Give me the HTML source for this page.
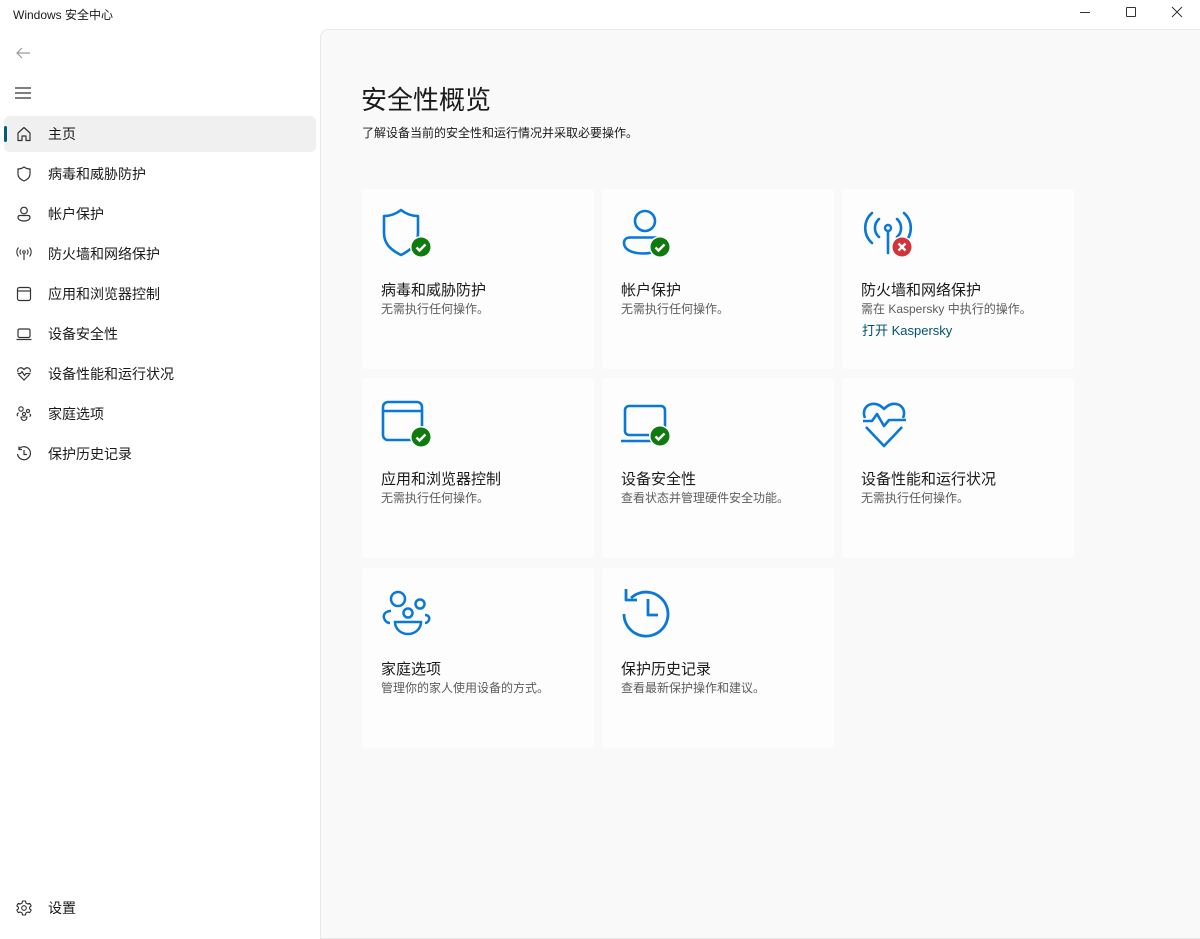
<!DOCTYPE html>
<html><head><meta charset="utf-8"><style>
*{margin:0;padding:0;box-sizing:border-box}
body{width:1200px;height:929px;background:#fff;font-family:"Liberation Sans","Noto Sans CJK SC",sans-serif;position:relative;overflow:hidden;color:#1a1a1a}
.title{position:absolute;left:13px;top:6px;font-size:12px;color:#1a1a1a}
.win{position:absolute;top:0;right:0;height:30px;display:flex}
.win div{width:46px;height:30px;position:relative}
.panel{position:absolute;left:320px;top:29px;width:890px;height:910px;background:#f9f9f9;border:1px solid #e8e8e8;border-radius:8px 0 0 0}
.nav{position:absolute;left:4px;width:312px;height:36px;font-size:14px;line-height:36px;padding-left:44px}
.nav svg{position:absolute;left:12px;top:10px}
.sel{background:#f0f0f0;border-radius:5px}
.sel:before{content:"";position:absolute;left:0;top:10px;width:3px;height:16px;border-radius:2px;background:#005f73}
h1{position:absolute;left:361px;top:80px;font-size:26px;font-weight:normal;color:#1a1a1a}
.sub{position:absolute;left:362px;top:124px;font-size:12px;color:#1a1a1a}
.card{position:absolute;width:232px;height:180px;background:#fdfdfd;border-radius:4px}
.card svg{position:absolute;left:18px;top:18px}
.card .t{position:absolute;left:19px;top:90px;font-size:15px;color:#1a1a1a}
.card .d{position:absolute;left:19px;top:111px;font-size:12px;color:#5d5d5d}
.card .l{position:absolute;left:20px;top:131px;font-size:13px;color:#00536b}
</style></head><body>
<div class="title">Windows 安全中心</div>
<div class="win">
<div><div style="position:absolute;left:18px;top:12px;width:10px;height:1px;background:#333"></div></div>
<div><div style="position:absolute;left:18px;top:7px;width:10px;height:10px;border:1px solid #333;border-radius:1px"></div></div>
<div><svg width="46" height="30" style="position:absolute;left:0;top:0"><path d="M18 7l10 10M28 7l-10 10" stroke="#333" stroke-width="1"/></svg></div>
</div>

<svg style="position:absolute;left:15px;top:46px" width="16" height="14"><path d="M15 7H2M7 2L2 7l5 5" fill="none" stroke="#9a9a9a" stroke-width="1.2"/></svg>
<svg style="position:absolute;left:15px;top:87px" width="16" height="12"><path d="M0 1h16M0 6h16M0 11h16" stroke="#333" stroke-width="1.2"/></svg>

<div class="nav sel" style="top:116px"><svg width="16" height="16"><path d="M2 7L8 1.5 14 7v7.5H10V10H6v4.5H2z" fill="none" stroke="#333" stroke-width="1.2" stroke-linejoin="round"/></svg>主页</div>
<div class="nav" style="top:156px"><svg width="16" height="16"><path d="M8 1C6 2.5 4 3 2 3v5c0 3 2.5 5.5 6 7 3.5-1.5 6-4 6-7V3c-2 0-4-.5-6-2z" fill="none" stroke="#333" stroke-width="1.2"/></svg>病毒和威胁防护</div>
<div class="nav" style="top:196px"><svg width="16" height="16"><circle cx="8" cy="4.5" r="3.3" fill="none" stroke="#333" stroke-width="1.2"/><path d="M2 11.5c0-1.5 1-2 2-2h8c1 0 2 .5 2 2 0 2-2.5 3.5-6 3.5s-6-1.5-6-3.5z" fill="none" stroke="#333" stroke-width="1.2"/></svg>帐户保护</div>
<div class="nav" style="top:236px"><svg width="16" height="16"><circle cx="8" cy="6" r="1.3" fill="none" stroke="#333"/><path d="M8 7.5V14M5 3.5a3.5 3.5 0 000 5M11 3.5a3.5 3.5 0 010 5M2.5 1.5a7 7 0 000 9M13.5 1.5a7 7 0 010 9" fill="none" stroke="#333" stroke-width="1.1"/></svg>防火墙和网络保护</div>
<div class="nav" style="top:276px"><svg width="16" height="16"><rect x="1.5" y="1.5" width="13" height="13" rx="2" fill="none" stroke="#333" stroke-width="1.2"/><path d="M1.5 5h13" stroke="#333" stroke-width="1.2"/></svg>应用和浏览器控制</div>
<div class="nav" style="top:316px"><svg width="16" height="16"><rect x="2" y="3" width="12" height="8.5" rx="1.5" fill="none" stroke="#333" stroke-width="1.2"/><path d="M0.5 13.5h15" stroke="#333" stroke-width="1.2"/></svg>设备安全性</div>
<div class="nav" style="top:356px"><svg width="16" height="16"><path d="M1.5 7.5h3l1.5-2 2.5 4 1.5-2h4.5M2.5 8.5L8 14l5.5-5.5M2 6C0.5 2.5 5 0 8 3.5 11-0 15.5 2.5 14 6" fill="none" stroke="#333" stroke-width="1.2"/></svg>设备性能和运行状况</div>
<div class="nav" style="top:396px"><svg width="16" height="16"><circle cx="5" cy="3" r="2.2" fill="none" stroke="#333" stroke-width="1.1"/><circle cx="12" cy="5" r="1.6" fill="none" stroke="#333" stroke-width="1.1"/><circle cx="8" cy="8" r="1.6" fill="none" stroke="#333" stroke-width="1.1"/><path d="M3 7C1 7 .5 9 2 10M13.5 8c1.5.5 1.5 2 0 2.5M5 11h6c0 2-1.5 3.5-3 3.5S5 13 5 11z" fill="none" stroke="#333" stroke-width="1.1"/></svg>家庭选项</div>
<div class="nav" style="top:436px"><svg width="16" height="16"><path d="M3 3A6.5 6.5 0 1 1 1.5 8M3 0.5v3h3M8 4v4.5h3" fill="none" stroke="#333" stroke-width="1.2"/></svg>保护历史记录</div>
<div class="nav" style="top:890px"><svg width="16" height="16"><circle cx="8" cy="8" r="2.3" fill="none" stroke="#333" stroke-width="1.1"/><path d="M6.5 1h3l.4 2 1.8 1 2-.7 1.5 2.6-1.6 1.3v1.6l1.6 1.3-1.5 2.6-2-.7-1.8 1-.4 2h-3l-.4-2-1.8-1-2 .7L.8 10.1l1.6-1.3V7.2L.8 5.9l1.5-2.6 2 .7 1.8-1z" fill="none" stroke="#333" stroke-width="1.1" stroke-linejoin="round"/></svg>设置</div>

<div class="panel"></div>
<h1>安全性概览</h1>
<div class="sub">了解设备当前的安全性和运行情况并采取必要操作。</div>

<!-- row1 -->
<div class="card" style="left:362px;top:189px">
<svg width="60" height="60"><path d="M21 3c-5 4-10 6-17 6v17c0 11 7 17 17 22 10-5 17-11 17-22V9c-7 0-12-2-17-6z" fill="none" stroke="#0a78d7" stroke-width="2.6" stroke-linejoin="round"/><circle cx="41" cy="40" r="11" fill="#fdfdfd"/><circle cx="41" cy="40" r="9.5" fill="#0f7b0f"/><path d="M36.5 40.5l3 3 6-6" fill="none" stroke="#fff" stroke-width="2.4"/></svg>
<div class="t">病毒和威胁防护</div><div class="d">无需执行任何操作。</div></div>
<div class="card" style="left:602px;top:189px">
<svg width="60" height="60"><circle cx="25" cy="14" r="10" fill="none" stroke="#0a78d7" stroke-width="2.6"/><path d="M4 36c0-4 3-5.5 6-5.5h26c3 0 6 1.5 6 5.5 0 6-7 10.5-19 10.5S4 42 4 36z" fill="none" stroke="#0a78d7" stroke-width="2.6"/><circle cx="40" cy="40" r="11" fill="#fdfdfd"/><circle cx="40" cy="40" r="9.5" fill="#0f7b0f"/><path d="M35.5 40.5l3 3 6-6" fill="none" stroke="#fff" stroke-width="2.4"/></svg>
<div class="t">帐户保护</div><div class="d">无需执行任何操作。</div></div>
<div class="card" style="left:842px;top:189px">
<svg width="60" height="60"><circle cx="28" cy="21" r="3" fill="none" stroke="#0a78d7" stroke-width="2.4"/><path d="M28 24v22M19 12a12 12 0 000 18M37 12a12 12 0 010 18M12 6a20 20 0 000 30M44 6a20 20 0 010 30" fill="none" stroke="#0a78d7" stroke-width="2.6" stroke-linecap="round"/><circle cx="42" cy="40" r="11" fill="#fdfdfd"/><circle cx="42" cy="40" r="9.5" fill="#d13438"/><path d="M38.5 36.5l7 7M45.5 36.5l-7 7" stroke="#fff" stroke-width="2.4"/></svg>
<div class="t">防火墙和网络保护</div><div class="d">需在 Kaspersky 中执行的操作。</div><div class="l">打开 Kaspersky</div></div>

<!-- row2 -->
<div class="card" style="left:362px;top:378px">
<svg width="60" height="60"><rect x="3" y="6" width="39" height="38" rx="5" fill="none" stroke="#0a78d7" stroke-width="2.6"/><path d="M3 15h39" stroke="#0a78d7" stroke-width="2.6"/><circle cx="41" cy="41" r="11" fill="#fdfdfd"/><circle cx="41" cy="41" r="9.5" fill="#0f7b0f"/><path d="M36.5 41.5l3 3 6-6" fill="none" stroke="#fff" stroke-width="2.4"/></svg>
<div class="t">应用和浏览器控制</div><div class="d">无需执行任何操作。</div></div>
<div class="card" style="left:602px;top:378px">
<svg width="60" height="60"><rect x="5" y="10" width="40" height="29" rx="4" fill="none" stroke="#0a78d7" stroke-width="2.6"/><path d="M1 45h34" stroke="#0a78d7" stroke-width="2.6"/><circle cx="40" cy="40" r="11" fill="#fdfdfd"/><circle cx="40" cy="40" r="9.5" fill="#0f7b0f"/><path d="M35.5 40.5l3 3 6-6" fill="none" stroke="#fff" stroke-width="2.4"/></svg>
<div class="t">设备安全性</div><div class="d">查看状态并管理硬件安全功能。</div></div>
<div class="card" style="left:842px;top:378px">
<svg width="60" height="60"><path d="M3 25h9l5-7 7 12 5-6h17M6 31l18 19 18-19M5 22C0 10 14 2 24 13 34 2 48 10 43 22" fill="none" stroke="#0a78d7" stroke-width="2.6" stroke-linejoin="round"/></svg>
<div class="t">设备性能和运行状况</div><div class="d">无需执行任何操作。</div></div>

<!-- row3 -->
<div class="card" style="left:362px;top:568px">
<svg width="60" height="60"><circle cx="18" cy="13" r="7" fill="none" stroke="#0a78d7" stroke-width="2.5"/><circle cx="40" cy="18" r="4.5" fill="none" stroke="#0a78d7" stroke-width="2.5"/><circle cx="28" cy="27" r="4.5" fill="none" stroke="#0a78d7" stroke-width="2.5"/><path d="M11 25c-5 0-8 3-7 7 1 3 3 5 6 5M45 29c3 0 5 2 4 5-1 2-2 3-4 3M15 36h26c0 7-6 12-13 12s-13-5-13-12z" fill="none" stroke="#0a78d7" stroke-width="2.5"/></svg>
<div class="t">家庭选项</div><div class="d">管理你的家人使用设备的方式。</div></div>
<div class="card" style="left:602px;top:568px">
<svg width="60" height="60"><path d="M11 12A22 22 0 1 1 4 28M6 3v11h11M28 13v16h10" fill="none" stroke="#0a78d7" stroke-width="2.8" stroke-linejoin="round"/></svg>
<div class="t">保护历史记录</div><div class="d">查看最新保护操作和建议。</div></div>
</body></html>
